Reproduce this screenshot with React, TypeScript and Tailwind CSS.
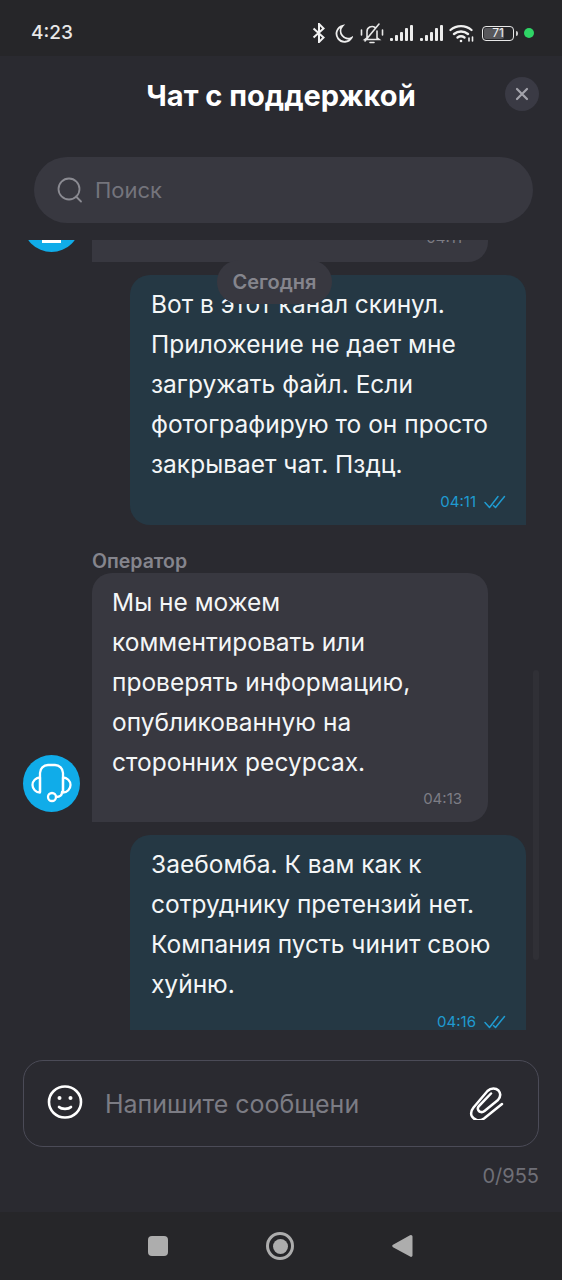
import React from "react";

const font = { fontFamily: '"Inter", "Noto Sans", sans-serif' };

const Checks = () => (
  <svg width="22" height="14" viewBox="0 0 22 14" fill="none" stroke="#1f9bd1" strokeWidth="1.5" strokeLinecap="round" strokeLinejoin="round">
    <path d="M1 7.500l4.500 5L14 1.500" />
    <path d="M9.500 10.500l2 2L20.500 1.500" />
  </svg>
);

const Signal = () => (
  <svg width="23" height="17" viewBox="0 0 23 17" fill="#ececec">
    <rect x="0" y="13" width="3" height="3" rx="1" />
    <rect x="5" y="10" width="3" height="6" rx="1" />
    <rect x="10" y="7" width="3" height="9" rx="1" />
    <rect x="15" y="3" width="3" height="13" rx="1" />
    <rect x="20" y="0" width="3" height="16" rx="1" />
  </svg>
);

const StatusIcons = () => (
  <div className="flex items-center h-[24px]">
    <svg width="14" height="20" viewBox="0 0 14 22" fill="none" stroke="#f2f2f2" strokeWidth="2.200">
      <path d="M1 6l11 10-5 5V1l5 5L1 16" />
    </svg>
    <svg className="ml-[8px]" width="19" height="19" viewBox="0 0 20 20" fill="none" stroke="#eeeeee" strokeWidth="1.900" strokeLinecap="round">
      <path d="M9 2a8.500 8.500 0 1 0 9.500 12.500A8 8 0 0 1 9 2z" />
    </svg>
    <svg className="ml-[7px]" width="24" height="22" viewBox="0 0 24 22" fill="none" stroke="#e8e8e8" strokeWidth="1.600" strokeLinecap="round">
      <path d="M7 16V9.500a5 5 0 0 1 8-4M17 9v7l2 1.500H5L7 16M10 20.500h4M5 19L19 2M1.500 8v5M22.500 8v5" />
    </svg>
    <div className="ml-[6px]"><Signal /></div>
    <div className="ml-[7px]"><Signal /></div>
    <svg className="ml-[6px]" width="26" height="20" viewBox="0 0 26 20" fill="none" stroke="#f0f0f0" strokeWidth="2.300" strokeLinecap="round">
      <path d="M1.500 7a16 16 0 0 1 21 0M5 11a11 11 0 0 1 14 0M8.500 14.500a6 6 0 0 1 7 0" />
      <circle cx="12" cy="18" r="1.300" fill="#f0f0f0" stroke="none" />
      <path d="M20 15v3M23.500 14v4" strokeWidth="1.600" />
    </svg>
    <div className="ml-[7px] flex items-center">
      <div className="relative w-[32px] h-[15px] rounded-[4px] border border-[#e8e8e8] p-px">
        <div className="h-full w-[71%] rounded-[2px] bg-[#57575b]" />
        <span className="absolute inset-0 flex items-center justify-center text-[12px] leading-none text-[#f0f0f0]">71</span>
      </div>
      <div className="ml-[2px] w-[2px] h-[5px] rounded-r bg-[#cccccc]" />
    </div>
    <div className="ml-[6px] w-[10px] h-[10px] rounded-full bg-[#2fd566]" />
  </div>
);

const Avatar = () => (
  <div className="w-[57px] h-[57px] rounded-full bg-[#10ace9] shrink-0">
    <svg width="57" height="57" viewBox="0 0 57 57" fill="none" stroke="#ffffff" strokeWidth="2.300" strokeLinecap="round" strokeLinejoin="round">
      <path d="M17 37V18a8 8 0 0 1 8-8h7a8 8 0 0 1 8 8V37" />
      <path d="M17 22.500a7.500 7.500 0 0 0 0 15zM40 22.500a7.500 7.500 0 0 1 0 15z" />
      <path d="M39 37c0 3.500-2.500 5-6 5" />
      <circle cx="29" cy="42" r="4" />
    </svg>
  </div>
);

const Outgoing = ({ lines, time, className }: { lines: string[]; time: string; className: string }) => (
  <div className={`ml-[130px] w-[396px] bg-[#253844] rounded-t-[20px] rounded-bl-[20px] pl-[21px] pr-[20px] pt-[9px] ${className}`}>
    {lines.map((l) => (
      <p key={l} className="text-[24.5px] leading-[40px] text-[#f4f6f7] whitespace-nowrap">{l}</p>
    ))}
    <div className="flex items-center justify-end gap-[8px] h-[36px] text-[15px] text-[#1f9bd1]">
      {time}
      <Checks />
    </div>
  </div>
);

export default function App() {
  return (
    <div className="w-[562px] h-[1280px] bg-[#2a2a30] flex flex-col overflow-hidden" style={font}>
      <div className="h-[56px] bg-[#262629] shrink-0 flex items-center justify-between pl-[31px] pr-[28px] pt-[10px]">
        <span className="text-[19px] font-medium text-[#e8e8e8]">4:23</span>
        <StatusIcons />
      </div>

      <div className="relative h-[78px] shrink-0 flex items-center justify-center pt-[1px]">
        <h1 className="text-[29px] font-bold text-white">Чат с поддержкой</h1>
        <button className="absolute right-[23px] top-[21px] w-[34px] h-[34px] rounded-full bg-[#3a3a44] flex items-center justify-center">
          <svg width="14" height="14" viewBox="0 0 14 14" stroke="#a3a3ab" strokeWidth="2.200" strokeLinecap="round">
            <path d="M2 2l10 10M12 2L2 12" />
          </svg>
        </button>
      </div>

      <div className="mr-[29px] ml-[34px] mt-[23px] h-[66px] shrink-0 rounded-full bg-[#383840] flex items-center pl-[23px]">
        <svg width="26" height="26" viewBox="0 0 26 26" fill="none" stroke="#8b8b92" strokeWidth="1.800" strokeLinecap="round">
          <circle cx="12" cy="12" r="10.500" />
          <path d="M19 19.500l5 5" />
        </svg>
        <span className="ml-[12px] text-[22px] text-[#74747c]">Поиск</span>
      </div>

      <div className="relative mt-[17px] h-[790px] shrink-0 overflow-hidden">
        <div className="absolute left-[23px] top-[-45px] w-[57px] h-[57px] rounded-full bg-[#10ace9] overflow-hidden">
          <div className="absolute left-[19px] top-[45px] w-[19px] h-[3px] bg-white" />
        </div>
        <div className="ml-[92px] w-[396px] h-[22px] bg-[#383840] rounded-br-[20px] overflow-hidden">
          <div className="-mt-[13px] pr-[26px] text-right text-[15px] text-[#7d7d85]">04:11</div>
        </div>

        <Outgoing
          className="mt-[13px] h-[250px]"
          time="04:11"
          lines={["Вот в этот канал скинул.", "Приложение не дает мне", "загружать файл. Если", "фотографирую то он просто", "закрывает чат. Пздц."]}
        />

        <div className="ml-[92px] mt-[25px] text-[19.5px] leading-[22px] font-semibold text-[#85858d]">Оператор</div>

        <div className="flex items-end mt-[1px] pl-[23px]">
          <div className="mr-[12px] mb-[10px]"><Avatar /></div>
          <div className="w-[396px] h-[249px] bg-[#383840] rounded-t-[20px] rounded-br-[20px] pl-[20px] pt-[9px]">
            {["Мы не можем", "комментировать или", "проверять информацию,", "опубликованную на", "сторонних ресурсах."].map((l) => (
              <p key={l} className="text-[24.5px] leading-[40px] text-[#f4f6f7] whitespace-nowrap">{l}</p>
            ))}
            <div className="h-[34px] flex items-center justify-end pr-[26px] text-[15px] text-[#7d7d85]">04:13</div>
          </div>
        </div>

        <Outgoing
          className="mt-[13px] h-[300px]"
          time="04:16"
          lines={["Заебомба. К вам как к", "сотруднику претензий нет.", "Компания пусть чинит свою", "хуйню."]}
        />

        <div className="absolute left-[217px] top-[20px] w-[115px] h-[44px] rounded-[22px] bg-[#383840] flex items-center justify-center pb-[1px] text-[20px] font-semibold text-[#85858d]">
          Сегодня
        </div>
        <div className="absolute left-[533px] top-[430px] w-[6px] h-[290px] rounded-full bg-[#303036]" />
      </div>

      <div className="mx-[23px] mt-[30px] h-[87px] shrink-0 rounded-[20px] border border-[#4b4b57] flex items-center pl-[23px] pr-[34px]">
        <svg className="shrink-0 -mt-[3px]" width="36" height="36" viewBox="0 0 36 36" fill="none" stroke="#ffffff" strokeWidth="2.600" strokeLinecap="round">
          <ellipse cx="18" cy="18" rx="16" ry="15.500" />
          <path d="M12 23c2.500 2.500 9.500 2.500 12 0" />
          <circle cx="12.500" cy="14" r="2" fill="#ffffff" stroke="none" />
          <circle cx="23.500" cy="14" r="2" fill="#ffffff" stroke="none" />
        </svg>
        <div className="ml-[22px] pt-[3px] w-[254px] overflow-hidden whitespace-nowrap text-[25px] text-[#7c7c84]">Напишите сообщение</div>
        <svg className="ml-auto shrink-0 -mt-[4px]" width="36" height="36" viewBox="0 0 36 36" fill="none" stroke="#ffffff" strokeWidth="2.500" strokeLinecap="round" strokeLinejoin="round">
          <path d="M34 20L16 34.500C11 38 5.500 36 3.500 31.500C2.500 28.500 3.500 26 5.500 23.500L19.500 7C23 3.500 28 4 30.500 6.500C33 9.500 32.500 13 30 16L16.500 27C14 29 11.500 28 10.500 26.500C9.500 25 10 23 11 22L23 9.500" />
        </svg>
      </div>

      <div className="mt-[16px] mr-[23px] text-right text-[20px] leading-[26px] text-[#6f6f77]">0/955</div>

      <div className="mt-auto h-[68px] bg-[#262629] flex items-center pl-[148px]">
        <div className="w-[20px] h-[20px] rounded-[4px] bg-[#adadad]" />
        <div className="ml-[98px] w-[28px] h-[28px] rounded-full border-[3px] border-[#adadad] flex items-center justify-center">
          <div className="w-[15px] h-[15px] rounded-full bg-[#adadad]" />
        </div>
        <svg className="ml-[98px]" width="21" height="24" viewBox="0 0 21 24" fill="#adadad">
          <path d="M19 1a1.500 1.500 0 0 1 1.500 1.500v19a1.500 1.500 0 0 1-2.400 1.100L1 13.200a1.500 1.500 0 0 1 0-2.400L18 1.300z" />
        </svg>
      </div>
    </div>
  );
}
